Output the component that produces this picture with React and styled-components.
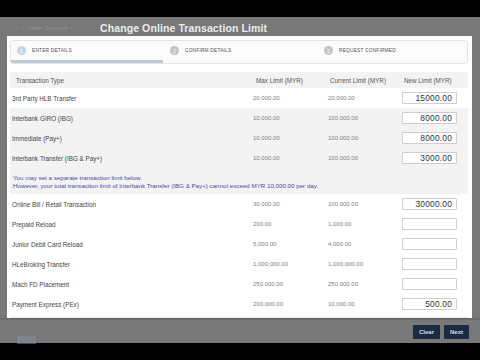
import React from 'react'
import styled, { createGlobalStyle } from 'styled-components'

const Global = createGlobalStyle`
  html, body { margin: 0; padding: 0; background: #000; }
  body { font-family: "Liberation Sans", Arial, sans-serif; }
`

const Screen = styled.div`
  width: 480px;
  height: 360px;
  display: flex;
  flex-direction: column;
  background: #000;
  overflow: hidden;
`

const Letterbox = styled.div`
  height: 17px;
  background: #000;
  flex: none;
`

const Stage = styled.div`
  flex: 1;
  display: flex;
  flex-direction: column;
  background: #787878;
`

const TitleBar = styled.div`
  height: 19px;
  display: flex;
  align-items: center;
  padding: 2px 0 0 15px;
  box-sizing: border-box;
  gap: 6px;
  flex: none;
`

const Crumb = styled.span`
  font-size: 6px;
  color: #939393;
  width: 79px;
  white-space: nowrap;
`

const Title = styled.span`
  font-size: 10.5px;
  font-weight: bold;
  color: #ececec;
  letter-spacing: 0.1px;
`

const Middle = styled.div`
  flex: 1;
  display: flex;
  padding: 0 8px 0 7px;
`

const Panel = styled.div`
  flex: 1;
  background: #fff;
  display: flex;
  flex-direction: column;
  padding: 4px 4px 0 3px;
`

const Steps = styled.div`
  position: relative;
  height: 24px;
  border: 1px solid #e4e4e4;
  border-radius: 3px;
  background: #fbfbfb;
  display: grid;
  grid-template-columns: 153px 154px 1fr;
  align-items: center;
  box-sizing: border-box;
  overflow: hidden;
`

const Step = styled.div`
  display: flex;
  align-items: center;
  gap: 6px;
  padding-left: 6px;
  font-size: 4.8px;
  color: #555;
  text-transform: uppercase;
  letter-spacing: 0.2px;
  margin-top: -3px;
`

const Dot = styled.span`
  width: 9px;
  height: 9px;
  border-radius: 50%;
  background: ${p => (p.$active ? '#c3d6e6' : '#c4c4c4')};
  color: #fff;
  font-size: 5px;
  display: flex;
  align-items: center;
  justify-content: center;
`

const Progress = styled.div`
  position: absolute;
  left: 0;
  bottom: 0;
  width: 152px;
  height: 3px;
  background: #b9ccd8;
`

const Table = styled.div`
  margin-top: 8px;
  display: flex;
  flex-direction: column;
`

const Row = styled.div`
  display: grid;
  grid-template-columns: 241px 75px 75px 1fr;
  align-items: center;
  height: ${p => (p.$head ? '16px' : '20px')};
  background: ${p => (p.$shade ? '#f3f3f3' : '#fff')};
  padding-left: 2px;
  font-size: 6.3px;
  color: ${p => (p.$head ? '#555' : '#444')};
`

const Cell = styled.span`
  padding-left: ${p => p.$pad || 0}px;
  white-space: nowrap;
`

const Amount = styled.span`
  color: #808080;
  font-size: 6px;
`

const LimitInput = styled.input`
  width: 55px;
  height: 12px;
  box-sizing: border-box;
  border: 1px solid #cfcfcf;
  border-radius: 1px;
  text-align: right;
  font-family: "Liberation Sans", Arial, sans-serif;
  font-size: 8.4px;
  letter-spacing: 0.2px;
  color: #333;
  padding: 0 4px 0 0;
  margin-left: -1px;
  background: #fff;
`

const Note = styled.div`
  background: #f3f3f3;
  padding: 6px 0 5px 3px;
  font-size: 6.2px;
  line-height: 7.5px;
  color: #4b4aa0;
`

const Rule = styled.div`
  height: 1px;
  background: #e6e6e6;
  margin-top: 3px;
`

const Footer = styled.div`
  height: 25px;
  flex: none;
  display: flex;
  align-items: center;
  justify-content: space-between;
  padding: 0 11px 0 17px;
  border-top: 2px solid #6a6a6a;
  box-sizing: border-box;
`

const Faded = styled.span`
  font-size: 5px;
  color: #7f8fa0;
  background: #8890a0;
  padding: 1px 3px;
  margin-top: 16px;
  opacity: 0.5;
`

const Buttons = styled.div`
  display: flex;
  gap: 4px;
`

const Btn = styled.button`
  height: 14px;
  width: ${p => p.$w}px;
  background: #1b2a44;
  color: #dcdcdc;
  border: none;
  border-radius: 1px;
  font-family: "Liberation Sans", Arial, sans-serif;
  font-size: 6px;
  font-weight: bold;
  padding: 0;
`

const top = [
  { name: '3rd Party HLB Transfer', max: '20,000.00', cur: '20,000.00', val: '15000.00' },
  { name: 'Interbank GIRO (IBG)', max: '10,000.00', cur: '100,000.00', val: '8000.00', shade: true },
  { name: 'Immediate (Pay+)', max: '10,000.00', cur: '100,000.00', val: '8000.00', shade: true },
  { name: 'Interbank Transfer (IBG & Pay+)', max: '10,000.00', cur: '100,000.00', val: '3000.00', shade: true },
]

const rest = [
  { name: 'Online Bill / Retail Transaction', max: '30,000.00', cur: '100,000.00', val: '30000.00' },
  { name: 'Prepaid Reload', max: '200.00', cur: '1,000.00', val: '' },
  { name: 'Junior Debit Card Reload', max: '5,000.00', cur: '4,000.00', val: '' },
  { name: 'HLeBroking Transfer', max: '1,000,000.00', cur: '1,000,000.00', val: '' },
  { name: 'Mach FD Placement', max: '250,000.00', cur: '250,000.00', val: '' },
  { name: 'Payment Express (PEx)', max: '200,000.00', cur: '10,000.00', val: '500.00' },
]

const LimitRow = ({ r }) => (
  <Row $shade={r.shade}>
    <Cell>{r.name}</Cell>
    <Amount>{r.max}</Amount>
    <Amount>{r.cur}</Amount>
    <LimitInput defaultValue={r.val} />
  </Row>
)

export default function App() {
  return (
    <Screen>
      <Global />
      <Letterbox />
      <Stage>
        <TitleBar>
          <Crumb>&lt;  ···  Other Services  &gt;</Crumb>
          <Title>Change Online Transaction Limit</Title>
        </TitleBar>
        <Middle>
          <Panel>
            <Steps>
              <Step><Dot $active>1</Dot>Enter Details</Step>
              <Step><Dot>2</Dot>Confirm Details</Step>
              <Step><Dot>3</Dot>Request Confirmed</Step>
              <Progress />
            </Steps>
            <Table>
              <Row $head $shade>
                <Cell $pad={4}>Transaction Type</Cell>
                <Cell $pad={3}>Max Limit (MYR)</Cell>
                <Cell $pad={2}>Current Limit (MYR)</Cell>
                <Cell $pad={1}>New Limit (MYR)</Cell>
              </Row>
              {top.map(r => <LimitRow key={r.name} r={r} />)}
              <Note>
                You may set a separate transaction limit below.<br />
                However, your total transaction limit of Interbank Transfer (IBG &amp; Pay+) cannot exceed MYR 10,000.00 per day.
              </Note>
              {rest.map(r => <LimitRow key={r.name} r={r} />)}
              <Rule />
            </Table>
          </Panel>
        </Middle>
        <Footer>
          <Faded>Close</Faded>
          <Buttons>
            <Btn $w={27}>Clear</Btn>
            <Btn $w={25}>Next</Btn>
          </Buttons>
        </Footer>
      </Stage>
      <Letterbox />
    </Screen>
  )
}
